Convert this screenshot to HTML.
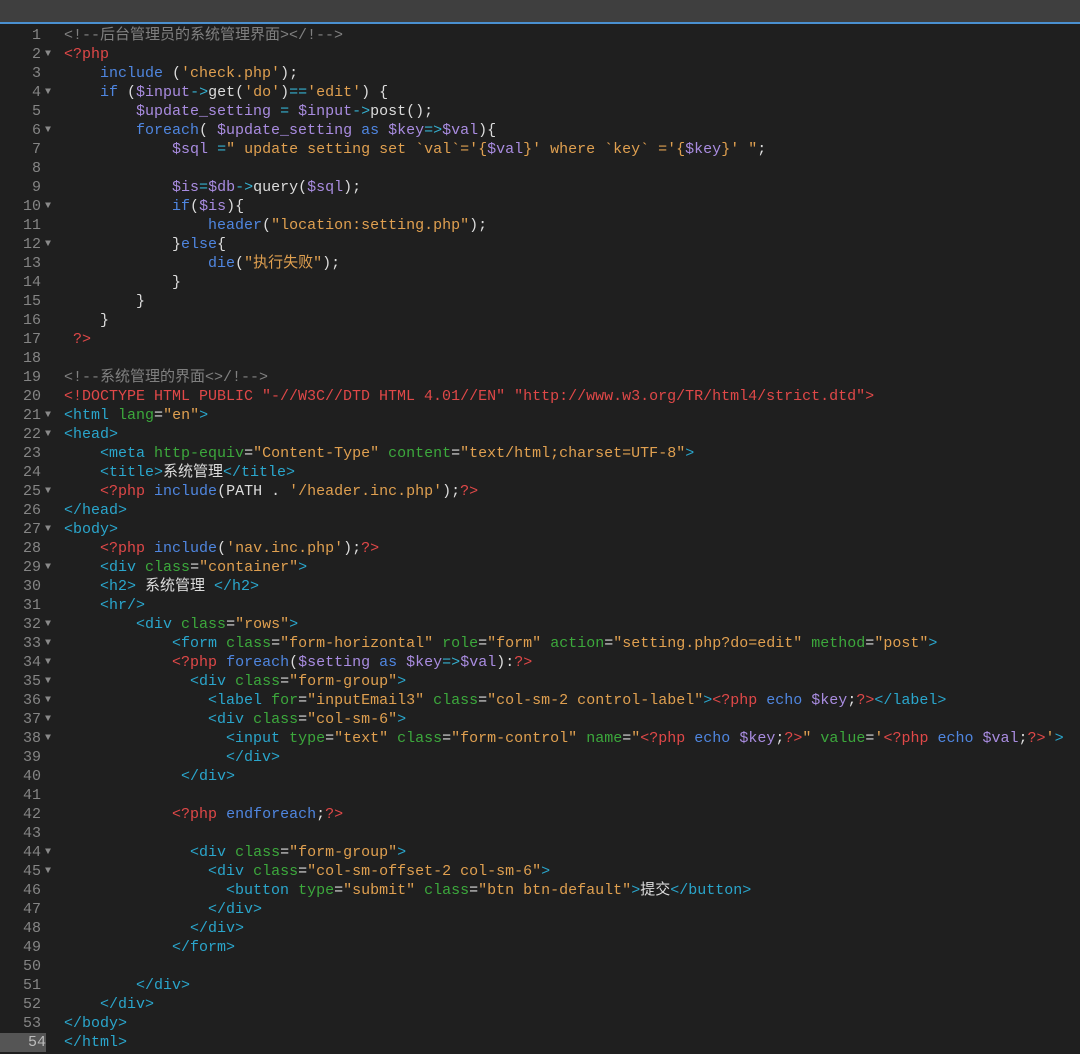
<!DOCTYPE html>
<html><head><meta charset="utf-8"><style>
body{margin:0;width:1080px;height:1054px;background:#1f1f1f;overflow:hidden;font-family:"Liberation Mono","Noto Sans CJK SC",monospace;font-size:15px;}
#bar{position:absolute;left:0;top:0;width:1080px;height:22px;background:#3f3f3f;border-bottom:2px solid #4a90d0;}
#ed{position:absolute;left:0;top:26px;width:1080px;}
.l{position:relative;height:19px;line-height:19px;white-space:pre;}
.n{position:absolute;left:0;width:41px;text-align:right;color:#858585;}
.f{position:absolute;left:45px;top:0;color:#8a8a8a;font-size:10px;}
.code{position:absolute;left:64px;color:#dcdcdc;}
.cur .n{background:#555;color:#bbb;width:46px;padding-right:0;}
.c{color:#808080}.p{color:#e04848}.k{color:#4f86e0}.v{color:#a98ce0}.s{color:#e0a050}.t{color:#2aa6cc}.a{color:#3ca83c}.o{color:#35b0d0}
</style></head><body>
<div id="bar"></div>
<div id="ed">
<div class="l"><span class="n">1</span><span class="code"><span class="c">&lt;!--后台管理员的系统管理界面&gt;&lt;/!--&gt;</span></span></div>
<div class="l"><span class="n">2</span><span class="f">▼</span><span class="code"><span class="p">&lt;?php</span></span></div>
<div class="l"><span class="n">3</span><span class="code">    <span class="k">include</span> (<span class="s">'check.php'</span>);</span></div>
<div class="l"><span class="n">4</span><span class="f">▼</span><span class="code">    <span class="k">if</span> (<span class="v">$input</span><span class="o">-&gt;</span>get(<span class="s">'do'</span>)<span class="o">==</span><span class="s">'edit'</span>) {</span></div>
<div class="l"><span class="n">5</span><span class="code">        <span class="v">$update_setting</span> <span class="o">=</span> <span class="v">$input</span><span class="o">-&gt;</span>post();</span></div>
<div class="l"><span class="n">6</span><span class="f">▼</span><span class="code">        <span class="k">foreach</span>( <span class="v">$update_setting</span> <span class="k">as</span> <span class="v">$key</span><span class="o">=&gt;</span><span class="v">$val</span>){</span></div>
<div class="l"><span class="n">7</span><span class="code">            <span class="v">$sql</span> <span class="o">=</span><span class="s">" update setting set `val`='{</span><span class="v">$val</span><span class="s">}' where `key` ='{</span><span class="v">$key</span><span class="s">}' "</span>;</span></div>
<div class="l"><span class="n">8</span><span class="code"></span></div>
<div class="l"><span class="n">9</span><span class="code">            <span class="v">$is</span><span class="o">=</span><span class="v">$db</span><span class="o">-&gt;</span>query(<span class="v">$sql</span>);</span></div>
<div class="l"><span class="n">10</span><span class="f">▼</span><span class="code">            <span class="k">if</span>(<span class="v">$is</span>){</span></div>
<div class="l"><span class="n">11</span><span class="code">                <span class="k">header</span>(<span class="s">"location:setting.php"</span>);</span></div>
<div class="l"><span class="n">12</span><span class="f">▼</span><span class="code">            }<span class="k">else</span>{</span></div>
<div class="l"><span class="n">13</span><span class="code">                <span class="k">die</span>(<span class="s">"执行失败"</span>);</span></div>
<div class="l"><span class="n">14</span><span class="code">            }</span></div>
<div class="l"><span class="n">15</span><span class="code">        }</span></div>
<div class="l"><span class="n">16</span><span class="code">    }</span></div>
<div class="l"><span class="n">17</span><span class="code"> <span class="p">?&gt;</span></span></div>
<div class="l"><span class="n">18</span><span class="code"></span></div>
<div class="l"><span class="n">19</span><span class="code"><span class="c">&lt;!--系统管理的界面&lt;&gt;/!--&gt;</span></span></div>
<div class="l"><span class="n">20</span><span class="code"><span class="p">&lt;!DOCTYPE HTML PUBLIC "-//W3C//DTD HTML 4.01//EN" "http://www.w3.org/TR/html4/strict.dtd"&gt;</span></span></div>
<div class="l"><span class="n">21</span><span class="f">▼</span><span class="code"><span class="t">&lt;html</span> <span class="a">lang</span>=<span class="s">"en"</span><span class="t">&gt;</span></span></div>
<div class="l"><span class="n">22</span><span class="f">▼</span><span class="code"><span class="t">&lt;head&gt;</span></span></div>
<div class="l"><span class="n">23</span><span class="code">    <span class="t">&lt;meta</span> <span class="a">http-equiv</span>=<span class="s">"Content-Type"</span> <span class="a">content</span>=<span class="s">"text/html;charset=UTF-8"</span><span class="t">&gt;</span></span></div>
<div class="l"><span class="n">24</span><span class="code">    <span class="t">&lt;title&gt;</span>系统管理<span class="t">&lt;/title&gt;</span></span></div>
<div class="l"><span class="n">25</span><span class="f">▼</span><span class="code">    <span class="p">&lt;?php</span> <span class="k">include</span>(PATH . <span class="s">'/header.inc.php'</span>);<span class="p">?&gt;</span></span></div>
<div class="l"><span class="n">26</span><span class="code"><span class="t">&lt;/head&gt;</span></span></div>
<div class="l"><span class="n">27</span><span class="f">▼</span><span class="code"><span class="t">&lt;body&gt;</span></span></div>
<div class="l"><span class="n">28</span><span class="code">    <span class="p">&lt;?php</span> <span class="k">include</span>(<span class="s">'nav.inc.php'</span>);<span class="p">?&gt;</span></span></div>
<div class="l"><span class="n">29</span><span class="f">▼</span><span class="code">    <span class="t">&lt;div</span> <span class="a">class</span>=<span class="s">"container"</span><span class="t">&gt;</span></span></div>
<div class="l"><span class="n">30</span><span class="code">    <span class="t">&lt;h2&gt;</span> 系统管理 <span class="t">&lt;/h2&gt;</span></span></div>
<div class="l"><span class="n">31</span><span class="code">    <span class="t">&lt;hr/&gt;</span></span></div>
<div class="l"><span class="n">32</span><span class="f">▼</span><span class="code">        <span class="t">&lt;div</span> <span class="a">class</span>=<span class="s">"rows"</span><span class="t">&gt;</span></span></div>
<div class="l"><span class="n">33</span><span class="f">▼</span><span class="code">            <span class="t">&lt;form</span> <span class="a">class</span>=<span class="s">"form-horizontal"</span> <span class="a">role</span>=<span class="s">"form"</span> <span class="a">action</span>=<span class="s">"setting.php?do=edit"</span> <span class="a">method</span>=<span class="s">"post"</span><span class="t">&gt;</span></span></div>
<div class="l"><span class="n">34</span><span class="f">▼</span><span class="code">            <span class="p">&lt;?php</span> <span class="k">foreach</span>(<span class="v">$setting</span> <span class="k">as</span> <span class="v">$key</span><span class="o">=&gt;</span><span class="v">$val</span>):<span class="p">?&gt;</span></span></div>
<div class="l"><span class="n">35</span><span class="f">▼</span><span class="code">              <span class="t">&lt;div</span> <span class="a">class</span>=<span class="s">"form-group"</span><span class="t">&gt;</span></span></div>
<div class="l"><span class="n">36</span><span class="f">▼</span><span class="code">                <span class="t">&lt;label</span> <span class="a">for</span>=<span class="s">"inputEmail3"</span> <span class="a">class</span>=<span class="s">"col-sm-2 control-label"</span><span class="t">&gt;</span><span class="p">&lt;?php</span> <span class="k">echo</span> <span class="v">$key</span>;<span class="p">?&gt;</span><span class="t">&lt;/label&gt;</span></span></div>
<div class="l"><span class="n">37</span><span class="f">▼</span><span class="code">                <span class="t">&lt;div</span> <span class="a">class</span>=<span class="s">"col-sm-6"</span><span class="t">&gt;</span></span></div>
<div class="l"><span class="n">38</span><span class="f">▼</span><span class="code">                  <span class="t">&lt;input</span> <span class="a">type</span>=<span class="s">"text"</span> <span class="a">class</span>=<span class="s">"form-control"</span> <span class="a">name</span>=<span class="s">"</span><span class="p">&lt;?php</span> <span class="k">echo</span> <span class="v">$key</span>;<span class="p">?&gt;</span><span class="s">"</span> <span class="a">value</span>=<span class="s">'</span><span class="p">&lt;?php</span> <span class="k">echo</span> <span class="v">$val</span>;<span class="p">?&gt;</span><span class="s">'</span><span class="t">&gt;</span></span></div>
<div class="l"><span class="n">39</span><span class="code">                  <span class="t">&lt;/div&gt;</span></span></div>
<div class="l"><span class="n">40</span><span class="code">             <span class="t">&lt;/div&gt;</span></span></div>
<div class="l"><span class="n">41</span><span class="code"></span></div>
<div class="l"><span class="n">42</span><span class="code">            <span class="p">&lt;?php</span> <span class="k">endforeach</span>;<span class="p">?&gt;</span></span></div>
<div class="l"><span class="n">43</span><span class="code"></span></div>
<div class="l"><span class="n">44</span><span class="f">▼</span><span class="code">              <span class="t">&lt;div</span> <span class="a">class</span>=<span class="s">"form-group"</span><span class="t">&gt;</span></span></div>
<div class="l"><span class="n">45</span><span class="f">▼</span><span class="code">                <span class="t">&lt;div</span> <span class="a">class</span>=<span class="s">"col-sm-offset-2 col-sm-6"</span><span class="t">&gt;</span></span></div>
<div class="l"><span class="n">46</span><span class="code">                  <span class="t">&lt;button</span> <span class="a">type</span>=<span class="s">"submit"</span> <span class="a">class</span>=<span class="s">"btn btn-default"</span><span class="t">&gt;</span>提交<span class="t">&lt;/button&gt;</span></span></div>
<div class="l"><span class="n">47</span><span class="code">                <span class="t">&lt;/div&gt;</span></span></div>
<div class="l"><span class="n">48</span><span class="code">              <span class="t">&lt;/div&gt;</span></span></div>
<div class="l"><span class="n">49</span><span class="code">            <span class="t">&lt;/form&gt;</span></span></div>
<div class="l"><span class="n">50</span><span class="code"></span></div>
<div class="l"><span class="n">51</span><span class="code">        <span class="t">&lt;/div&gt;</span></span></div>
<div class="l"><span class="n">52</span><span class="code">    <span class="t">&lt;/div&gt;</span></span></div>
<div class="l"><span class="n">53</span><span class="code"><span class="t">&lt;/body&gt;</span></span></div>
<div class="l cur"><span class="n">54</span><span class="code"><span class="t">&lt;/html&gt;</span></span></div>
</div>
</body></html>
